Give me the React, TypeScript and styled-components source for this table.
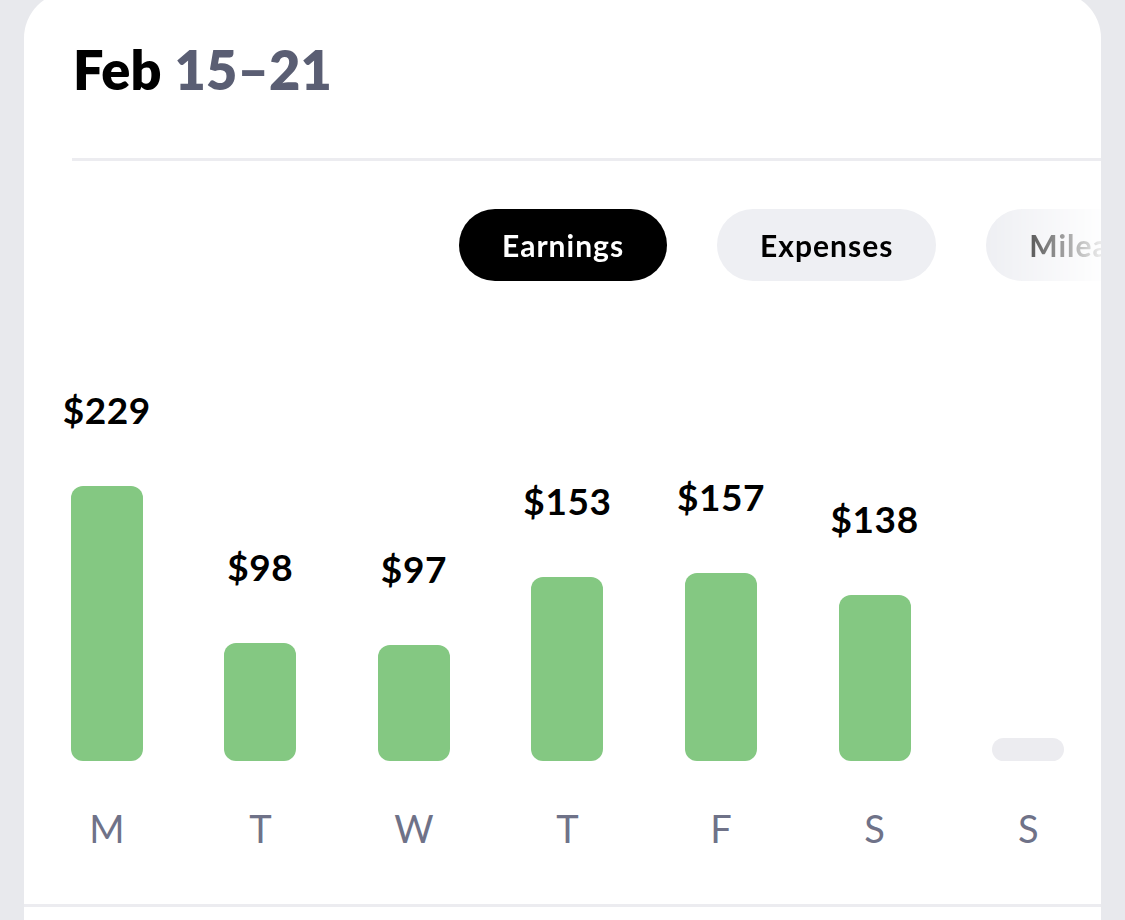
import React from "react";
import styled, { createGlobalStyle } from "styled-components";

const GlobalStyle = createGlobalStyle`
  html, body {
    margin: 0;
    padding: 0;
    height: 920px;
    overflow: hidden;
    background: #e8e9ed;
    font-family: "Lato", "Noto Sans", sans-serif;
    -webkit-font-smoothing: antialiased;
  }
`;

interface Day {
  letter: string;
  amount: number | null;
}

const days: Day[] = [
  { letter: "M", amount: 229 },
  { letter: "T", amount: 98 },
  { letter: "W", amount: 97 },
  { letter: "T", amount: 153 },
  { letter: "F", amount: 157 },
  { letter: "S", amount: 138 },
  { letter: "S", amount: null },
];

const tabs = ["Earnings", "Expenses", "Mileage"];

const App = () => {
  return (
    <>
      <GlobalStyle />
      <Page>
        <Card>
          <Title>
            Feb <Range>15–21</Range>
          </Title>
          <Divider />

          <TabRow>
            {tabs.map((t, i) => (
              <Tab key={t} active={i === 0}>
                {t}
              </Tab>
            ))}
          </TabRow>

          <Chart>
            {days.map((d, i) => (
              <Column key={i}>
                {d.amount !== null && <Amount>${d.amount}</Amount>}
                <Bar empty={d.amount === null} style={{ height: d.amount !== null ? d.amount * 1.2 : 23 }} />
                <DayLetter>{d.letter}</DayLetter>
              </Column>
            ))}
          </Chart>

          <BottomRule />
          <NextSection />
        </Card>
      </Page>
    </>
  );
};

export default App;

const Page = styled.div`
  padding: 0 24px;
`;

const Card = styled.div`
  margin-top: -8px;
  background: #ffffff;
  border-radius: 46px 46px 0 0;
  padding-top: 51px;
  overflow: hidden;
`;

const Title = styled.h1`
  margin: 0 0 0 49px;
  font-size: 54px;
  line-height: 1;
  font-weight: 800;
  color: #000000;
  letter-spacing: 0.2px;
`;

const Range = styled.span`
  color: #5a5e73;
`;

const Divider = styled.div`
  margin: 61px 0 0 48px;
  height: 3px;
  background: #ececf0;
`;

const TabRow = styled.div`
  display: flex;
  gap: 50px;
  margin-top: 48px;
  padding-left: 435px;
  overflow: hidden;
  white-space: nowrap;
  -webkit-mask-image: linear-gradient(to right, #000 0, #000 962px, rgba(0, 0, 0, 0.08) 1077px);
  mask-image: linear-gradient(to right, #000 0, #000 962px, rgba(0, 0, 0, 0.08) 1077px);
`;

const Tab = styled.div<{ active: boolean }>`
  flex-shrink: 0;
  height: 72px;
  padding: 0 43px;
  border-radius: 36px;
  display: flex;
  align-items: center;
  font-size: 30px;
  font-weight: 700;
  letter-spacing: 1px;
  background: ${(p) => (p.active ? "#000000" : "#eeeff3")};
  color: ${(p) => (p.active ? "#ffffff" : "#000000")};
`;

const Chart = styled.div`
  display: grid;
  grid-template-columns: repeat(7, 1fr);
  margin: 0 -4px 0 6px;
  height: 567px;
  align-items: end;
`;

const Column = styled.div`
  display: flex;
  flex-direction: column;
  align-items: center;
`;

const Amount = styled.div`
  font-size: 37px;
  font-weight: 700;
  line-height: 1;
  letter-spacing: 0.6px;
  color: #000000;
  margin-bottom: 58px;
`;

const Bar = styled.div<{ empty: boolean }>`
  width: 72px;
  border-radius: 12px;
  background: ${(p) => (p.empty ? "#ececf0" : "#84c882")};
`;

const DayLetter = styled.div`
  margin-top: 47px;
  height: 40px;
  font-size: 38px;
  line-height: 40px;
  font-weight: 400;
  color: #6f7288;
`;

const BottomRule = styled.div`
  margin-top: 56px;
  height: 3px;
  background: #ececf0;
`;

const NextSection = styled.div`
  height: 40px;
`;
